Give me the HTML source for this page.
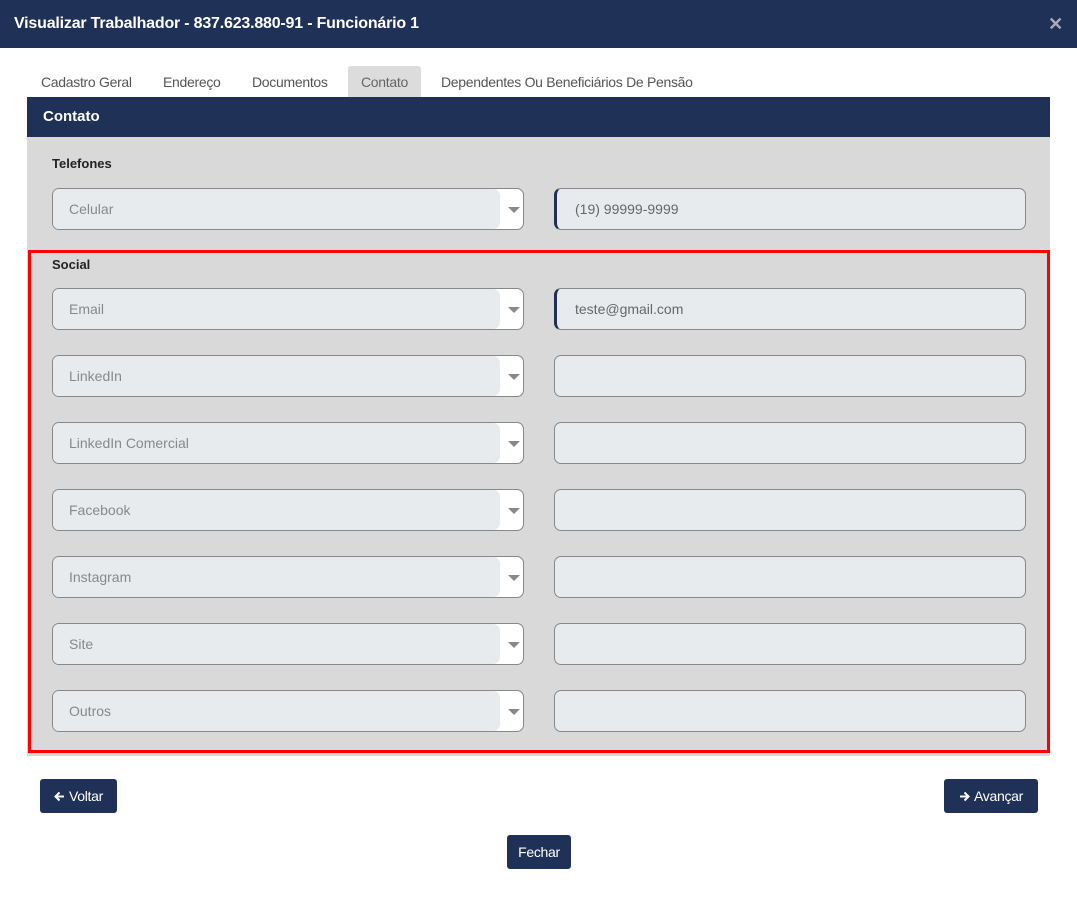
<!DOCTYPE html><html><head><style>
*{box-sizing:border-box;margin:0;padding:0}
body{width:1077px;height:897px;background:#fff;font-family:"Liberation Sans",sans-serif;position:relative;overflow:hidden}
.hd{position:absolute;left:0;top:0;width:1077px;height:48px;background:#203157;color:#fff;font-weight:bold;font-size:16px;line-height:48px;padding-left:14px;letter-spacing:-0.2px}
.x{position:absolute;right:14px;top:0;color:#aab;font-size:18px}
.tab{position:absolute;top:66px;height:31px;line-height:33px;font-size:14px;color:#555;letter-spacing:-0.3px}
.tab.a{background:#dcdcdc;border-radius:3px 3px 0 0;padding:0 13px;color:#666}
.ph{position:absolute;left:27px;top:97px;width:1023px;height:40px;background:#203157;color:#fff;font-weight:bold;font-size:15px;line-height:40px;padding-left:16px}
.pb{position:absolute;left:27px;top:137px;width:1023px;height:619px;background:#d9d9d9}
.lbl{position:absolute;left:52px;font-weight:bold;font-size:13px;color:#222}
.sel{position:absolute;left:52px;width:472px;height:42px;background:#fff;border:1px solid #888;border-radius:7px;overflow:hidden}
.sel .in{position:absolute;left:0;top:0;width:447px;height:40px;background:#e8ebee;border-radius:0 7px 7px 0;color:#888;font-size:14px;line-height:40px;padding-left:16px}
.sel .ar{position:absolute;left:455px;top:18px;border-left:6px solid transparent;border-right:6px solid transparent;border-top:6px solid #888}
.inp{position:absolute;left:554px;width:472px;height:42px;background:#e8ebee;border:1px solid #888;border-radius:7px;color:#666;font-size:14px;line-height:40px;padding-left:18px}
.inp.f{border-left:3px solid #203157}
.red{position:absolute;left:28px;top:250px;width:1022px;height:503px;border:3px solid #f00}
.btn{position:absolute;background:#203157;color:#fff;font-size:14px;border-radius:3px;height:34px;line-height:34px;text-align:center;letter-spacing:-0.3px}
.btn svg{vertical-align:-1px;margin-right:4px}
</style></head><body>
<div class="hd">Visualizar Trabalhador - 837.623.880-91 - Funcionário 1<span class="x">✕</span></div>
<div class="tab" style="left:41px">Cadastro Geral</div>
<div class="tab" style="left:163px">Endereço</div>
<div class="tab" style="left:252px">Documentos</div>
<div class="tab a" style="left:348px">Contato</div>
<div class="tab" style="left:441px">Dependentes Ou Beneficiários De Pensão</div>
<div class="ph">Contato</div>
<div class="pb"></div>
<div class="lbl" style="top:156px">Telefones</div>
<div class="sel" style="top:188px"><div class="in">Celular</div><div class="ar"></div></div>
<div class="inp f" style="top:188px">(19) 99999-9999</div>
<div class="lbl" style="top:257px">Social</div>
<div class="sel" style="top:288px"><div class="in">Email</div><div class="ar"></div></div>
<div class="inp f" style="top:288px">teste@gmail.com</div>
<div class="sel" style="top:355px"><div class="in">LinkedIn</div><div class="ar"></div></div><div class="inp" style="top:355px"></div>
<div class="sel" style="top:422px"><div class="in">LinkedIn Comercial</div><div class="ar"></div></div><div class="inp" style="top:422px"></div>
<div class="sel" style="top:489px"><div class="in">Facebook</div><div class="ar"></div></div><div class="inp" style="top:489px"></div>
<div class="sel" style="top:556px"><div class="in">Instagram</div><div class="ar"></div></div><div class="inp" style="top:556px"></div>
<div class="sel" style="top:623px"><div class="in">Site</div><div class="ar"></div></div><div class="inp" style="top:623px"></div>
<div class="sel" style="top:690px"><div class="in">Outros</div><div class="ar"></div></div><div class="inp" style="top:690px"></div>
<div class="red"></div>
<div class="btn" style="left:40px;top:779px;width:77px"><svg width="11" height="11" viewBox="0 0 11 11"><path d="M10 5.5H2M5.5 1.5L1.5 5.5L5.5 9.5" stroke="#fff" stroke-width="2" fill="none"/></svg>Voltar</div>
<div class="btn" style="left:944px;top:779px;width:94px"><svg width="11" height="11" viewBox="0 0 11 11"><path d="M1 5.5H9M5.5 1.5L9.5 5.5L5.5 9.5" stroke="#fff" stroke-width="2" fill="none"/></svg>Avançar</div>
<div class="btn" style="left:507px;top:835px;width:64px">Fechar</div>
</body></html>
